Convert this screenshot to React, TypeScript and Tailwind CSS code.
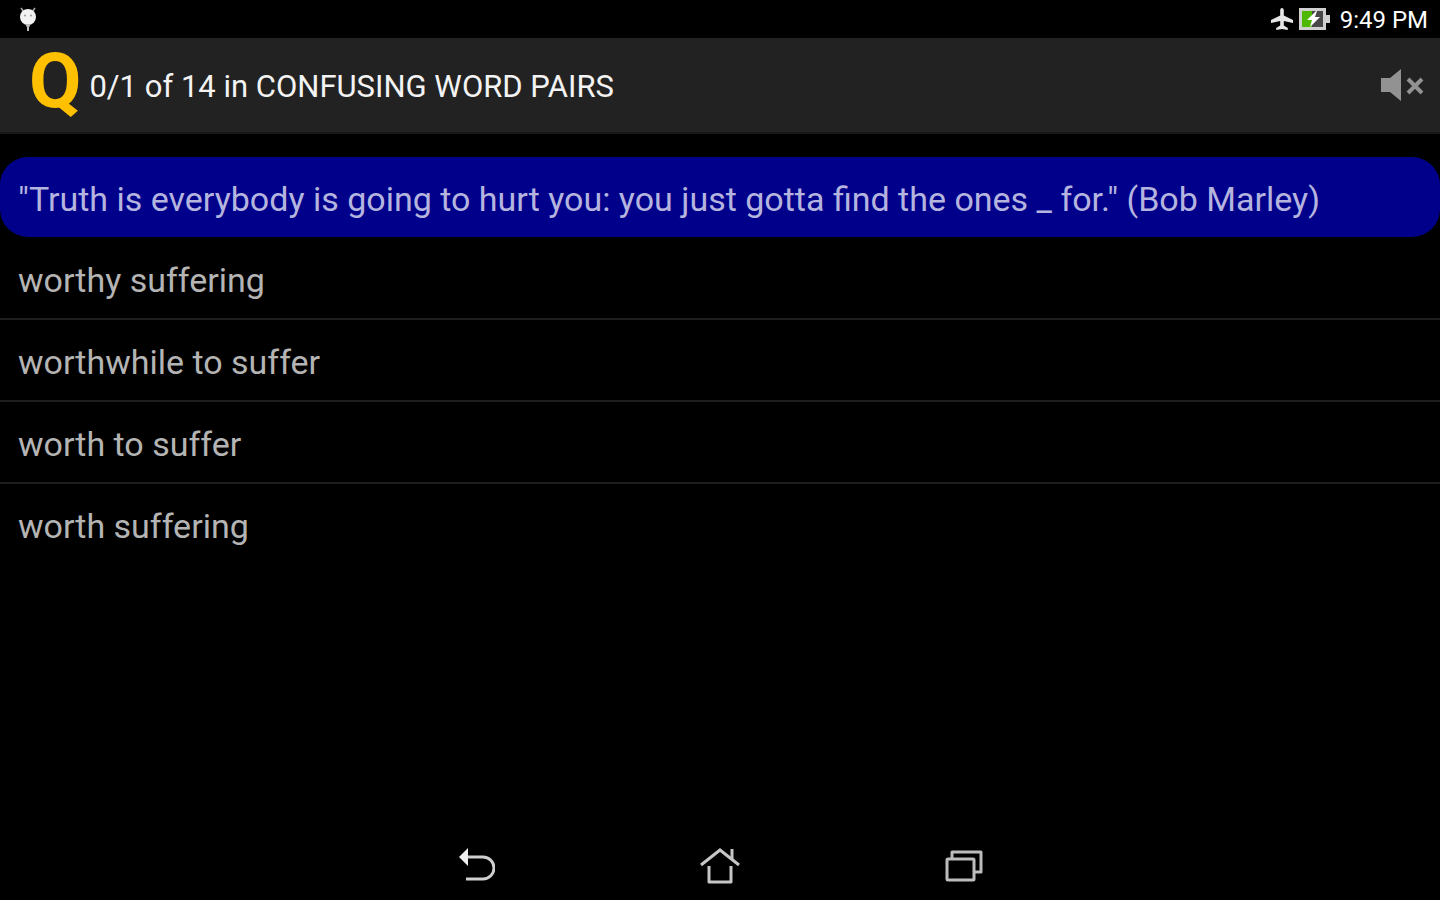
const choices = [
  "worthy suffering",
  "worthwhile to suffer",
  "worth to suffer",
  "worth suffering",
];

function DebugIcon() {
  return (
    <svg width="18" height="26" viewBox="0 0 18 26" aria-hidden="true">
      <path d="M2 2l3 4M16 2l-3 4" stroke="#aaa" strokeWidth="1.5" />
      <circle cx="9" cy="11" r="8" fill="#f2f2f2" />
      <circle cx="6" cy="9.5" r="1" fill="#999" />
      <circle cx="12" cy="9.5" r="1" fill="#999" />
      <path d="M7 18h4v2l-1 1v4H8v-4l-1-1z" fill="#bbb" />
    </svg>
  );
}

function AirplaneIcon() {
  return (
    <svg width="22" height="24" viewBox="0 0 22 24" aria-hidden="true">
      <path
        d="M11 1c1.200 0 1.800 1.200 1.800 2.500v5l9.200 4.500v3l-9.200-2v4.500l4 2.500v2L11 22l-5.800 1v-2l4-2.500V14L0 16v-3l9.200-4.500v-5C9.200 2.200 9.800 1 11 1z"
        fill="#e6e6e6"
      />
    </svg>
  );
}

function BatteryIcon() {
  return (
    <svg width="31" height="24" viewBox="0 0 31 24" aria-hidden="true">
      <path d="M0 1h27v7h4v8h-4v7H0z" fill="#d0d0d0" />
      <path d="M3 4h21v16H3z" fill="#484848" />
      <path d="M3 4h10v16H3z" fill="#4fb800" />
      <path d="M17 4l-9 9h5l-2 7 10-10h-5l2-6z" fill="#fff" />
    </svg>
  );
}

function MutedIcon() {
  return (
    <svg width="44" height="34" viewBox="0 0 44 34" aria-hidden="true">
      <path d="M1 10h9L21 1v32L10 24H1z" fill="#929292" />
      <path d="M28 11l14 14M42 11L28 25" stroke="#929292" strokeWidth="4" />
    </svg>
  );
}

function BackIcon() {
  return (
    <svg width="38" height="36" viewBox="0 0 38 36" aria-hidden="true">
      <path
        d="M10 10h16a11 11 0 0 1 0 22H9"
        fill="none"
        stroke="#cfcfcf"
        strokeWidth="3"
      />
      <path d="M2 10l9-9v18z" fill="#f0f0f0" />
    </svg>
  );
}

function HomeIcon() {
  return (
    <svg width="42" height="38" viewBox="0 0 42 38" aria-hidden="true">
      <g fill="none" stroke="#c6c6c6" strokeWidth="3">
        <path d="M2 19L21 4l19 15" />
        <path d="M33 3v11" />
        <path d="M10 20v16h22V20" strokeLinejoin="round" />
      </g>
    </svg>
  );
}

function RecentIcon() {
  return (
    <svg width="40" height="36" viewBox="0 0 40 36" aria-hidden="true">
      <g fill="none" stroke="#bcbcbc" strokeWidth="3">
        <rect x="2" y="12" width="27" height="21" rx="1" />
        <path d="M7 12V5h29v20h-7" strokeLinejoin="round" />
      </g>
    </svg>
  );
}

function StatusBar() {
  return (
    <div className="flex h-[38px] items-center justify-between pr-3 pl-[19px]">
      <DebugIcon />
      <div className="flex items-center text-white">
        <AirplaneIcon />
        <span className="ml-[6px]">
          <BatteryIcon />
        </span>
        <span className="ml-[10px] pt-[2px] text-2xl">9:49 PM</span>
      </div>
    </div>
  );
}

function TitleBar() {
  return (
    <header className="flex h-24 items-center justify-between border-b-2 border-[#181818] bg-[#222] pr-4 pl-[29px]">
      <div className="flex items-center gap-2">
        <span className="pb-2 text-[76px] leading-none font-bold text-[#ffc000]">
          Q
        </span>
        <h1 className="pt-1 text-[31px] text-[#f3f3f3]">
          0/1 of 14 in CONFUSING WORD PAIRS
        </h1>
      </div>
      <button type="button" aria-label="Sound off">
        <MutedIcon />
      </button>
    </header>
  );
}

export default function App() {
  return (
    <div className="flex min-h-screen flex-col bg-black font-['Roboto',sans-serif]">
      <StatusBar />
      <TitleBar />
      <main className="mt-[23px] grow">
        <p className="rounded-[28px] bg-[#00008b] px-[18px] pt-[18px] pb-[14px] text-[34px] leading-[48px] text-[#b4b4df]">
          "Truth is everybody is going to hurt you: you just gotta find the ones
          _ for." (Bob Marley)
        </p>
        <ul className="mt-px divide-y-2 divide-[#1e1e1e]">
          {choices.map((choice) => (
            <li key={choice}>
              <button
                type="button"
                className="w-full px-[18px] pt-[18px] pb-[14px] text-left text-[34px] leading-[48px] text-[#b4b4b4]"
              >
                {choice}
              </button>
            </li>
          ))}
        </ul>
      </main>
      <nav className="flex h-[70px] items-center justify-center gap-[204px] pl-[2px]">
        <button type="button" aria-label="Back">
          <BackIcon />
        </button>
        <button type="button" aria-label="Home">
          <HomeIcon />
        </button>
        <button type="button" aria-label="Recent apps">
          <RecentIcon />
        </button>
      </nav>
    </div>
  );
}
